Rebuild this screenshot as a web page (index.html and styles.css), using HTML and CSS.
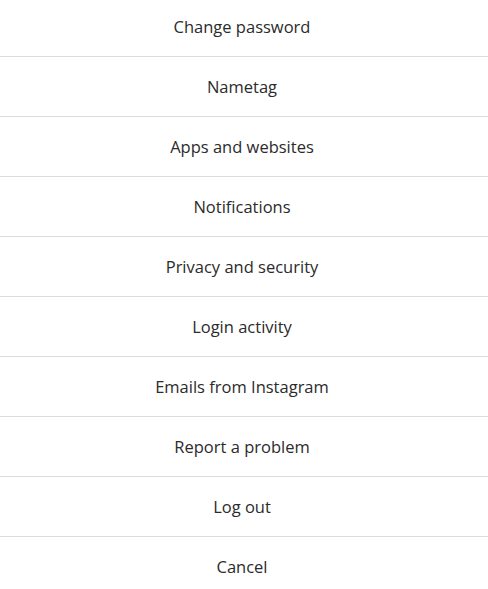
FILE: index.html
```html
<!DOCTYPE html>
<html lang="en">
<head>
<meta charset="utf-8">
<title>Settings</title>
<link rel="stylesheet" href="styles.css">
</head>
<body>
<div class="menu">
  <button class="item first">Change password</button>
  <button class="item">Nametag</button>
  <button class="item">Apps and websites</button>
  <button class="item">Notifications</button>
  <button class="item">Privacy and security</button>
  <button class="item">Login activity</button>
  <button class="item">Emails from Instagram</button>
  <button class="item">Report a problem</button>
  <button class="item">Log out</button>
  <button class="item">Cancel</button>
</div>
</body>
</html>
```
FILE: styles.css
```css
html, body {
  margin: 0;
  padding: 0;
  background: #fff;
}
.menu {
  display: flex;
  flex-direction: column;
  width: 488px;
}
.item {
  display: flex;
  align-items: center;
  justify-content: center;
  height: 60px;
  margin: 0;
  padding: 0 4px 0 0;
  border: 0;
  border-top: 1px solid #dbdbdb;
  background: #fff;
  color: #2b2b2b;
  font-family: "Open Sans", sans-serif;
  font-size: 16.5px;
  font-weight: 400;
  line-height: 20px;
  flex-shrink: 0;
}
.item.first {
  border-top: 0;
  height: 56px;
  padding-bottom: 2px;
}
```
